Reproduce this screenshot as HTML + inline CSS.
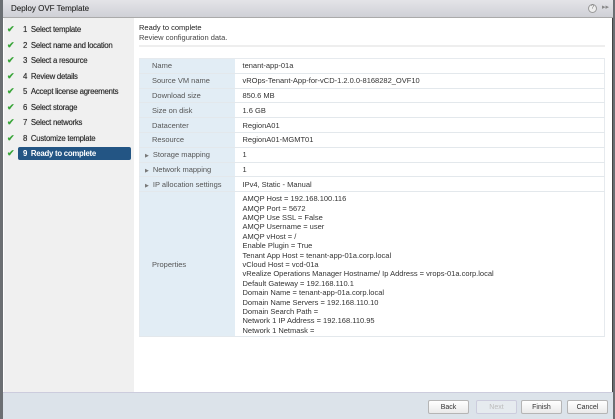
<!DOCTYPE html>
<html><head><style>
*{margin:0;padding:0;box-sizing:border-box}
body{width:615px;height:419px;overflow:hidden;background:#6b6f73;font-family:"Liberation Sans",sans-serif;font-size:7.5px;color:#333;position:relative}
#dlg{position:absolute;left:3px;top:0;width:610px;height:419px;background:#fff;border-right:1px solid #444}
#title{position:absolute;left:0;top:0;width:610px;height:18px;background:linear-gradient(#e4e4e8,#cfd0d6);border-bottom:1px solid #aaa;font-size:8px;color:#333;padding:4px 8px;text-shadow:0 0 0.3px #333}
#left{position:absolute;left:1px;top:18px;width:130px;height:374px;background:#f0f0f0}
.st{position:absolute;left:0;height:13px;width:130px;font-size:7.8px;color:#333;letter-spacing:-.25px;text-shadow:0 0 0.4px #333}
.st .ck{position:absolute;left:3px;top:2px;color:#3aa53a;font-size:9px;font-weight:bold;text-shadow:none;line-height:9px}
.st .tx{position:absolute;left:19px;top:2px}
.sel .tx{left:14px;top:0;width:113px;height:13px;background:#235584;color:#fff;border-radius:2px;padding:2px 5px;font-weight:bold;text-shadow:none}
#footer{position:absolute;left:0;top:392px;width:610px;height:27px;background:#dce3ea;border-top:1px solid #ccd}
.btn{position:absolute;top:7px;height:14px;width:41px;border:1px solid #b5b5b5;border-radius:2px;background:linear-gradient(#fff,#eaeaea);font-size:7px;text-align:center;line-height:13px;color:#333}
table{position:absolute;left:136px;top:58px;width:466px;border-collapse:collapse;border:1px solid #e6eaee}
td{height:14.8px;border-bottom:1px solid #e3e8ec;padding:0 0 0 8px;vertical-align:middle;white-space:nowrap}
td.l{width:95px;background:#e2edf5;color:#555;padding-left:12px}
td.l.a{padding-left:5px}
.tri{font-size:5px;color:#777;margin-right:4px}
</style></head><body>
<div id="dlg">
<div id="title">Deploy OVF Template
<span style="position:absolute;right:16px;top:4px;width:9px;height:9px;border:1px solid #999;border-radius:50%;font-size:6px;text-align:center;line-height:7px;color:#777;background:#eee;text-shadow:none">?</span>
<span style="position:absolute;right:4px;top:3px;font-size:7px;color:#888;text-shadow:none">▸▸</span></div>
<div id="left">
<div class="st" style="top:5px"><span class="ck">✔</span><span class="tx">1 &nbsp;Select template</span></div>
<div class="st" style="top:20.5px"><span class="ck">✔</span><span class="tx">2 &nbsp;Select name and location</span></div>
<div class="st" style="top:36px"><span class="ck">✔</span><span class="tx">3 &nbsp;Select a resource</span></div>
<div class="st" style="top:52px"><span class="ck">✔</span><span class="tx">4 &nbsp;Review details</span></div>
<div class="st" style="top:67px"><span class="ck">✔</span><span class="tx">5 &nbsp;Accept license agreements</span></div>
<div class="st" style="top:83px"><span class="ck">✔</span><span class="tx">6 &nbsp;Select storage</span></div>
<div class="st" style="top:98px"><span class="ck">✔</span><span class="tx">7 &nbsp;Select networks</span></div>
<div class="st" style="top:114px"><span class="ck">✔</span><span class="tx">8 &nbsp;Customize template</span></div>
<div class="st sel" style="top:129px"><span class="ck">✔</span><span class="tx">9 &nbsp;Ready to complete</span></div>
</div>
<div style="position:absolute;left:136px;top:23px;font-size:7.5px;color:#222">Ready to complete</div>
<div style="position:absolute;left:136px;top:33px;font-size:7.5px;color:#444">Review configuration data.</div>
<div style="position:absolute;left:136px;top:45px;width:466px;height:2px;background:#eee"></div>
<table>
<tr><td class="l">Name</td><td>tenant-app-01a</td></tr>
<tr><td class="l">Source VM name</td><td>vROps-Tenant-App-for-vCD-1.2.0.0-8168282_OVF10</td></tr>
<tr><td class="l">Download size</td><td>850.6 MB</td></tr>
<tr><td class="l">Size on disk</td><td>1.6 GB</td></tr>
<tr><td class="l">Datacenter</td><td>RegionA01</td></tr>
<tr><td class="l">Resource</td><td>RegionA01-MGMT01</td></tr>
<tr><td class="l a"><span class="tri">▶</span>Storage mapping</td><td>1</td></tr>
<tr><td class="l a"><span class="tri">▶</span>Network mapping</td><td>1</td></tr>
<tr><td class="l a"><span class="tri">▶</span>IP allocation settings</td><td>IPv4, Static - Manual</td></tr>
<tr><td class="l" style="height:145px">Properties</td><td style="line-height:9.4px;padding-top:1px">AMQP Host = 192.168.100.116<br>AMQP Port = 5672<br>AMQP Use SSL = False<br>AMQP Username = user<br>AMQP vHost = /<br>Enable Plugin = True<br>Tenant App Host = tenant-app-01a.corp.local<br>vCloud Host = vcd-01a<br>vRealize Operations Manager Hostname/ Ip Address = vrops-01a.corp.local<br>Default Gateway = 192.168.110.1<br>Domain Name = tenant-app-01a.corp.local<br>Domain Name Servers = 192.168.110.10<br>Domain Search Path =<br>Network 1 IP Address = 192.168.110.95<br>Network 1 Netmask =</td></tr>
</table>
<div id="footer">
<div class="btn" style="left:425px">Back</div>
<div class="btn" style="left:473px;color:#bbb;background:#e6ebef;border-color:#ccd">Next</div>
<div class="btn" style="left:518px">Finish</div>
<div class="btn" style="left:564px">Cancel</div>
</div>
</div>
</body></html>
